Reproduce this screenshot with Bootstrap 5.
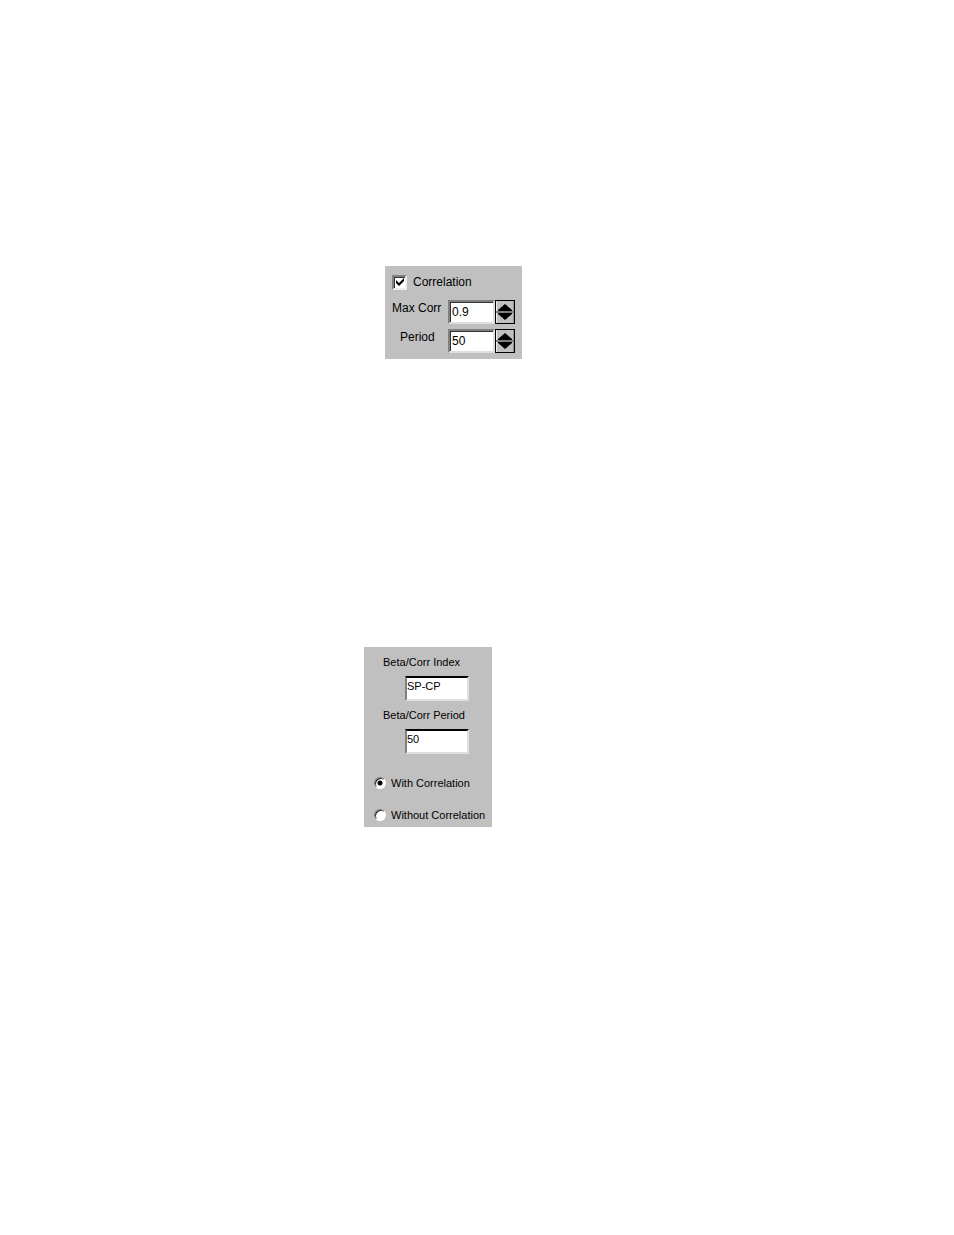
<!DOCTYPE html>
<html lang="en">
<head>
<meta charset="utf-8">
<meta name="viewport" content="width=device-width, initial-scale=1">
<title>Correlation settings</title>
<link href="https://cdn.jsdelivr.net/npm/bootstrap@5.3.0/dist/css/bootstrap.min.css" rel="stylesheet">
<style>
  body { background: #fff; color: #000; font-family: "Liberation Sans", Arial, sans-serif; }
  main { padding: 266px 0 240px; gap: 288px; }
  .panel { background: #c0c0c0; }
  .corr-panel { width: 137px; margin-left: calc(50% - 92px); padding: 8px 7px 6px; font-size: 12px; line-height: 16px; }
  .index-panel { width: 128px; margin-left: calc(50% - 113px); padding: 7px 0 4px 10px; font-size: 11px; line-height: 16px; }
  .field { border: 2px solid; border-color: #808080 #dfdfdf #dfdfdf #808080; border-radius: 0; background: #fff; color: #000; }
  .corr-panel .field { width: 47px; height: 24px; padding: 0 2px; box-shadow: inset 1px 1px #333; }
  .index-panel .field { width: 64px; height: 25px; padding: 0 0 5px; border-top-color: #000; margin: 6px 0 6px 31px; line-height: 16px; }
  .check-row { gap: 6px; margin-bottom: 10px; }
  .spin-row + .spin-row { margin-top: 5px; }
  .spin-label { width: 56px; height: 19px; }
  .spinner { width: 20px; height: 24px; border: 1px solid #000; background: #808080; gap: 2px; }
  .spinner button { flex: 1; min-height: 0; border: 0; padding: 0; background: #c0c0c0; box-shadow: inset 1px 0 #eee, inset -1px 0 #909090; }
  .spinner svg { display: block; margin: auto; }
  .spinner button:first-child { padding-top: 3px; }
  .spinner button:last-child { padding-bottom: 3px; }
  .index-label { padding-left: 9px; }
  .radios { gap: 16px; margin-top: 21px; }
  .radio-row { gap: 5px; }
  .tick, .dot { appearance: none; flex: none; margin: 0; background: #fff center no-repeat; }
  .tick { width: 15px; height: 15px; border: 2px solid; border-color: #808080 #eee #eee #808080; box-shadow: inset 1px 1px #333; }
  .tick:checked { background-image: url("data:image/svg+xml,%3Csvg xmlns='http://www.w3.org/2000/svg' width='11' height='11'%3E%3Cpath d='M2 4v3l3 3 5-5V2L5 7z'/%3E%3C/svg%3E"); background-position: 0 -1px; }
  .dot { width: 12px; height: 12px; border: 1px solid; border-color: #808080 #fff #fff #808080; border-radius: 50%; box-shadow: inset 1px 1px #222; }
  .dot:checked { background-image: radial-gradient(circle, #000 0 2px, transparent 3px); }
</style>
</head>
<body>
<main class="d-flex flex-column">
  <form class="panel corr-panel">
    <div class="check-row d-flex align-items-center">
      <input class="tick" type="checkbox" id="corr" checked>
      <label for="corr">Correlation</label>
    </div>
    <div class="spin-row d-flex">
      <label for="max" class="spin-label">Max Corr</label>
      <input class="field" id="max" value="0.9">
      <div class="spinner d-flex flex-column">
        <button type="button" aria-label="Increase Max Corr"><svg width="14" height="7"><path d="M7 0l7 6v1H0V6z"/></svg></button>
        <button type="button" aria-label="Decrease Max Corr"><svg width="14" height="7"><path d="M7 7l7-6V0H0v1z"/></svg></button>
      </div>
    </div>
    <div class="spin-row d-flex">
      <label for="period" class="spin-label ps-2">Period</label>
      <input class="field" id="period" value="50">
      <div class="spinner d-flex flex-column">
        <button type="button" aria-label="Increase Period"><svg width="14" height="7"><path d="M7 0l7 6v1H0V6z"/></svg></button>
        <button type="button" aria-label="Decrease Period"><svg width="14" height="7"><path d="M7 7l7-6V0H0v1z"/></svg></button>
      </div>
    </div>
  </form>

  <form class="panel index-panel">
    <label for="index" class="index-label d-block">Beta/Corr Index</label>
    <input class="field d-block" id="index" value="SP-CP">
    <label for="bperiod" class="index-label d-block">Beta/Corr Period</label>
    <input class="field d-block" id="bperiod" value="50">
    <div class="radios d-flex flex-column">
      <div class="radio-row d-flex align-items-center">
        <input class="dot" type="radio" name="mode" id="with" checked>
        <label for="with" class="text-nowrap">With Correlation</label>
      </div>
      <div class="radio-row d-flex align-items-center">
        <input class="dot" type="radio" name="mode" id="without">
        <label for="without" class="text-nowrap">Without Correlation</label>
      </div>
    </div>
  </form>
</main>
<script src="https://cdn.jsdelivr.net/npm/bootstrap@5.3.0/dist/js/bootstrap.bundle.min.js"></script>
</body>
</html>
